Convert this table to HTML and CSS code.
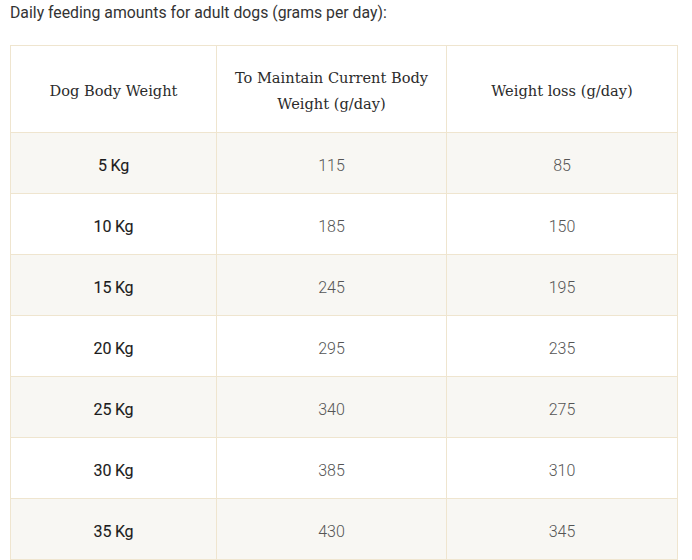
FILE: index.html
```html
<!DOCTYPE html>
<html lang="en">
<head>
<meta charset="utf-8">
<title>Daily feeding amounts</title>
<link rel="stylesheet" href="styles.css">
</head>
<body>
<div class="page">
  <p class="intro">Daily feeding amounts for adult dogs (grams per day):</p>
  <table class="feed">
    <colgroup>
      <col class="c1">
      <col class="c2">
      <col class="c3">
    </colgroup>
    <thead>
      <tr>
        <th>Dog Body Weight</th>
        <th>To Maintain Current Body Weight (g/day)</th>
        <th>Weight loss (g/day)</th>
      </tr>
    </thead>
    <tbody>
      <tr class="alt"><td class="w">5 Kg</td><td>115</td><td>85</td></tr>
      <tr><td class="w">10 Kg</td><td>185</td><td>150</td></tr>
      <tr class="alt"><td class="w">15 Kg</td><td>245</td><td>195</td></tr>
      <tr><td class="w">20 Kg</td><td>295</td><td>235</td></tr>
      <tr class="alt"><td class="w">25 Kg</td><td>340</td><td>275</td></tr>
      <tr><td class="w">30 Kg</td><td>385</td><td>310</td></tr>
      <tr class="alt"><td class="w">35 Kg</td><td>430</td><td>345</td></tr>
    </tbody>
  </table>
</div>
</body>
</html>
```
FILE: styles.css
```css
html, body {
  margin: 0;
  padding: 0;
  background: #ffffff;
}
.page {
  padding: 0 0 0 10px;
  font-family: Roboto, "Liberation Sans", sans-serif;
  color: #333333;
}
.intro {
  margin: 0;
  padding-top: 3px;
  font-size: 15.8px;
  line-height: 20px;
  color: #333333;
  height: 42px;
}
.feed {
  border-collapse: collapse;
  width: 667px;
  table-layout: fixed;
}
.feed .c1 { width: 206px; }
.feed .c2 { width: 230px; }
.feed .c3 { width: 231px; }
.feed th, .feed td {
  border: 1px solid #efe5cf;
  text-align: center;
  vertical-align: middle;
  padding: 4px 14px 0;
  box-sizing: border-box;
}
.feed th {
  font-family: "DejaVu Serif", "Liberation Serif", serif;
  font-weight: normal;
  font-size: 14.6px;
  line-height: 26px;
  color: #2b2b2b;
  height: 87px;
}
.feed td {
  height: 61px;
  font-size: 16px;
  font-weight: 300;
  color: #555555;
}
.feed td.w {
  font-weight: 400;
  color: #1c1c1c;
  letter-spacing: -0.2px;
  -webkit-text-stroke: 0.1px #1c1c1c;
}
.feed tr.alt td {
  background: #f8f7f3;
}
```
